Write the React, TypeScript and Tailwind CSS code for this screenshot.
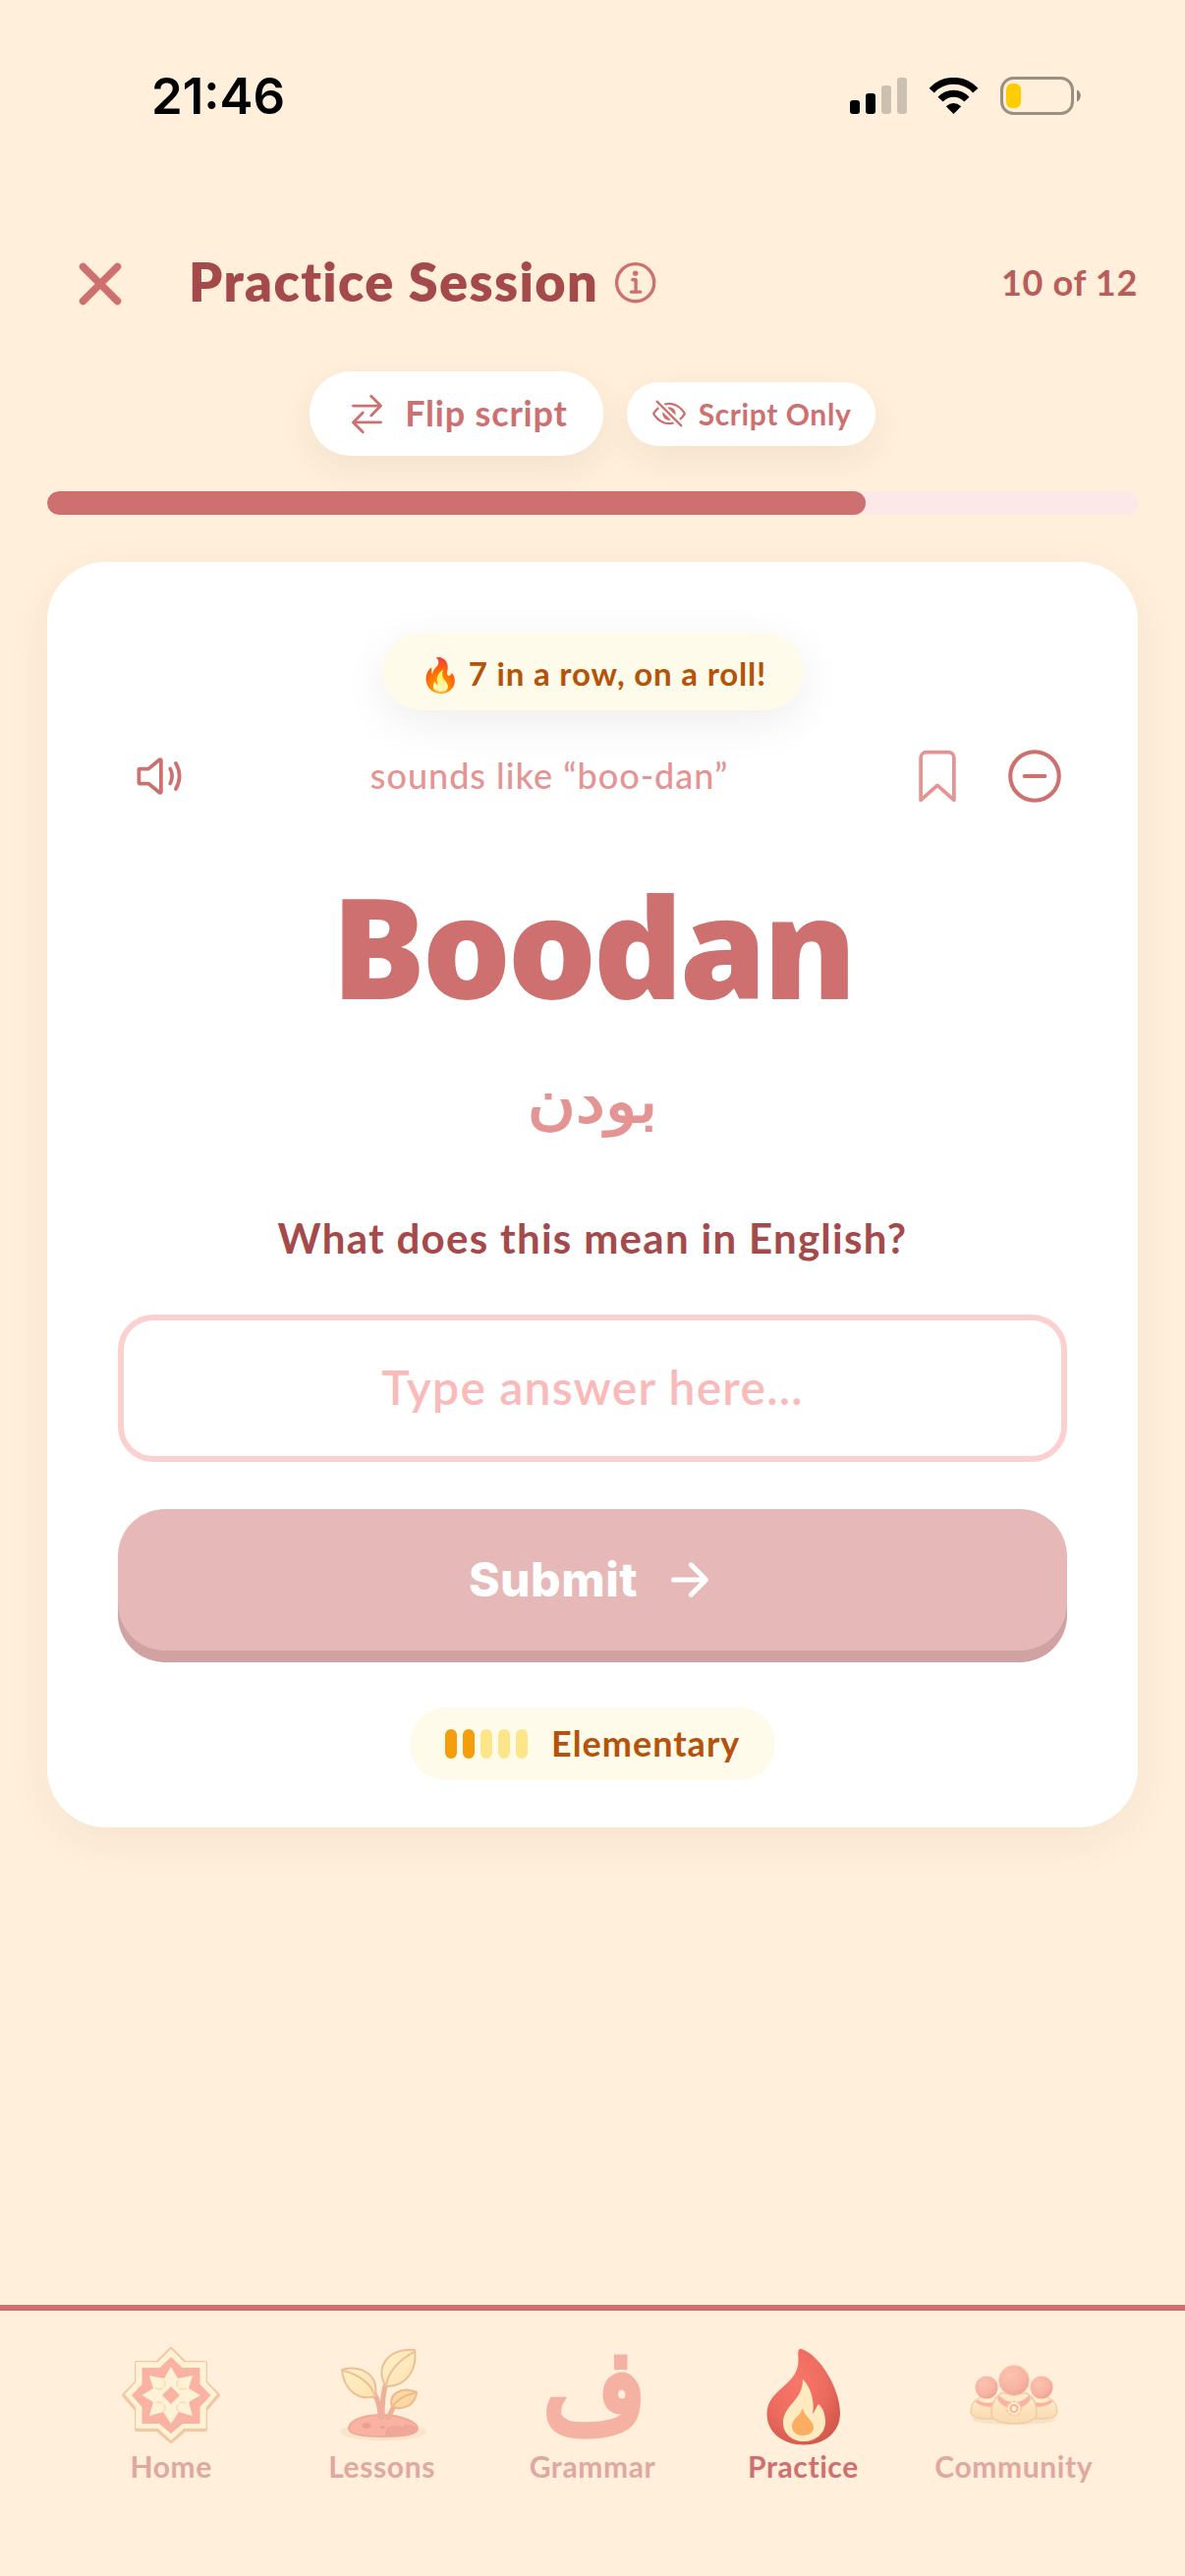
import type { ReactNode } from 'react';
import {
  IoArrowForward,
  IoBookmarkOutline,
  IoClose,
  IoEyeOffOutline,
  IoInformationCircleOutline,
  IoRemoveCircleOutline,
  IoSwapHorizontal,
  IoVolumeMediumOutline,
} from 'react-icons/io5';

function StatusBar() {
  return (
    <div className="flex h-[194px] shrink-0 items-center justify-between pl-[154px] pr-[106px]">
      <span className="pt-0.5 font-['Inter',sans-serif] text-[51px] font-semibold text-black">21:46</span>
      <div className="flex items-center">
        <svg width="58" height="37" viewBox="0 0 58 37" className="mr-[22px]">
          <rect x="0" y="23" width="10" height="14" rx="3" />
          <rect x="16" y="16" width="10" height="21" rx="3" />
          <rect x="32" y="8" width="10" height="29" rx="3" fill="#ccc0b0" />
          <rect x="48" y="0" width="10" height="37" rx="3" fill="#ccc0b0" />
        </svg>
        <svg width="51" height="37" viewBox="0 0 51 37" className="mr-[22px]">
          <path d="M3.2 13.1a30.4 30.4 0 0 1 44.6 0" fill="none" stroke="#000" strokeWidth="7" />
          <path d="M12.1 22.2a18.1 18.1 0 0 1 26.8 0" fill="none" stroke="#000" strokeWidth="7" />
          <path d="M17.8 29.2Q25.5 22.8 33.2 29.2L25.5 37Z" />
        </svg>
        <svg width="82" height="39" viewBox="0 0 82 39">
          <rect x="1.5" y="1.5" width="72" height="36" rx="12" fill="none" stroke="#9b8f82" strokeWidth="3" />
          <rect x="6" y="7" width="15" height="25" rx="6" fill="#ffcc00" />
          <path d="M78 13.5c5 2 5 10 0 12Z" fill="#8f857a" />
        </svg>
      </div>
    </div>
  );
}

function Header() {
  return (
    <header className="mt-[46px] flex h-24 items-center pl-[62px] pr-12">
      <IoClose className="mt-px size-20 text-[#ce7070]" />
      <h1 className="ml-[50px] pb-[3px] text-[54px] font-extrabold tracking-[1.4px] text-[#a54a4a]">Practice Session</h1>
      <IoInformationCircleOutline className="ml-3 size-[53px] text-[#ce7070]" />
      <span className="ml-auto pb-[3px] text-[36px] font-bold tracking-[0.7px] text-[#b85c5c]">10 of 12</span>
    </header>
  );
}

function Toggles() {
  return (
    <div className="mt-[42px] flex items-center justify-center gap-6 font-bold text-[#ce7070]">
      <button className="flex h-[86px] w-[299px] items-center justify-center gap-4 rounded-[42px] bg-white text-[36px] tracking-[0.8px] shadow-[0_12px_36px_rgba(80,50,0,0.07)]">
        <IoSwapHorizontal className="size-[45px]" />
        <span className="pb-0.5">Flip script</span>
      </button>
      <button className="flex h-[65px] w-[253px] items-center justify-center gap-3 rounded-[32px] bg-white text-[30px] tracking-[0.6px] shadow-[0_12px_36px_rgba(80,50,0,0.07)]">
        <IoEyeOffOutline className="size-9" />
        Script Only
      </button>
    </div>
  );
}

function LevelBadge() {
  const filled = 2;

  return (
    <div className="mx-auto mt-[46px] flex h-[74px] w-[372px] items-center rounded-[36px] bg-[#fffbeb] pl-9">
      <div className="flex gap-[6px]">
        {[1, 2, 3, 4, 5].map((n) => (
          <span key={n} className={`h-[30px] w-3 rounded-full ${n <= filled ? 'bg-[#f59e0b]' : 'bg-[#fde68a]'}`} />
        ))}
      </div>
      <span className="ml-6 pb-0.5 text-[36px] font-bold leading-none tracking-[1px] text-[#b45309]">Elementary</span>
    </div>
  );
}

function PracticeCard() {
  return (
    <main className="mx-12 mt-12 flex h-[1288px] shrink-0 flex-col rounded-[60px] bg-white px-[72px] pt-[72px] shadow-[0_12px_48px_rgba(80,50,0,0.06)]">
      <div className="ml-[269px] flex h-[79px] w-[429px] items-center justify-center rounded-full bg-[#fffbeb] pt-1 text-[33px] font-bold tracking-[0.8px] text-[#b45309] shadow-[0_12px_48px_rgba(0,0,0,0.07)]">
        <span className="mr-2 text-[34px] leading-none tracking-normal">🔥</span>
        7 in a row, on a roll!
      </div>

      <div className="mt-[19px] flex h-24 items-center text-[#ce7070]">
        <div className="flex w-[190px] pl-3">
          <IoVolumeMediumOutline className="size-[60px]" />
        </div>
        <p className="flex-1 pb-0.5 text-center text-[36px] font-medium tracking-[1px] text-[#e59494]">
          sounds like “boo-dan”
        </p>
        <div className="flex w-[278px] items-center justify-end gap-[36px]">
          <IoBookmarkOutline className="size-[60px] text-[#e59494]" />
          <IoRemoveCircleOutline className="size-[66px]" />
        </div>
      </div>

      <p className="mt-6 text-center font-['Open_Sans',sans-serif] text-[142px] font-extrabold leading-[200px] tracking-[-3.4px] text-[#ce7070]">
        Boodan
      </p>
      <p
        dir="rtl"
        className="mt-[19px] scale-y-90 text-center font-['DejaVu_Sans',sans-serif] text-[67px] leading-[80px] text-[#e59494] [-webkit-text-stroke:2px_#e59494]"
      >
        بودن
      </p>

      <h2 className="mt-[69px] text-center text-[42px] font-bold leading-[60px] tracking-[1.3px] text-[#a54a4a]">
        What does this mean in English?
      </h2>
      <input
        placeholder="Type answer here..."
        className="mt-12 h-[150px] w-full rounded-[36px] border-[6px] border-[#fdd0d0] pb-[3px] text-center text-[48px] font-semibold tracking-[1.2px] placeholder:text-[#fababa]"
      />
      <button className="mt-12 flex h-[144px] w-full shrink-0 items-center justify-center gap-[26px] rounded-[48px] bg-[#e6b8b8] font-['Inter',sans-serif] text-[48px] font-extrabold tracking-[0.5px] text-white shadow-[0_12px_0_#d1a2a2]">
        Submit
        <IoArrowForward className="size-[54px]" />
      </button>
      <div className="h-3 shrink-0" />
      <LevelBadge />
    </main>
  );
}

function HomeIcon() {
  return (
    <svg viewBox="0 0 100 100" className="size-[100px] overflow-visible" strokeLinejoin="round">
      <path
        d="M50 3 64 17H85V37L98 50 85 65V85H64L50 97 36 85H15V65L2 50 15 37V17H36Z"
        fill="#f0c8a2"
        stroke="#f0c8a2"
        strokeWidth="4"
      />
      <path d="M50 4 63 17H85V37L96 49 85 62V83H63L50 95 37 83H15V62L4 49 15 37V17H37Z" fill="#fff2d6" stroke="#fff2d6" strokeWidth="1.500" />
      <path d="M50 11 61.5 22H79.5V39L90.5 50 79.5 62V79H62L50 89 38 79H20.5V62L10 50 20.5 39V22H38.5Z" fill="#fab3a3" />
      <path
        d="M50 21 57 33 72 30 68 43 80 50 68 57 72 71 58 67 50 79 42 67 28 71 32 57 20.500 50 32 43 28 30 43 33Z"
        fill="#fff2d6"
      />
      <path d="M43 35q2 3 0 6M57 35q-2 3 0 6M43 60q2 3 0 6M57 60q-2 3 0 6M35 43q3 2 6 0M59 43q3 2 6 0M35 58q3-2 6 0M59 58q3-2 6 0" fill="none" stroke="#fbdfb2" strokeWidth="1.800" strokeLinecap="round" />
      <path d="M50 41 59 50 50 59 41 50Z" fill="#fab3a3" />
    </svg>
  );
}

function LessonsIcon() {
  return (
    <svg viewBox="0 0 100 100" className="size-[100px] overflow-visible" strokeLinejoin="round" strokeLinecap="round">
      <defs>
        <linearGradient id="leaf" x1="0" y1="0" x2="1" y2="1">
          <stop offset="0" stopColor="#fff0c8" />
          <stop offset="1" stopColor="#ffe2b0" />
        </linearGradient>
      </defs>
      <ellipse cx="51" cy="87" rx="44" ry="9.5" fill="#f9e5cb" />
      <path d="M16 84C16 76 30 70 50 70s36 8 36 14-16 8-35 8-35-2-35-8Z" fill="#fab3a3" stroke="#efaa98" strokeWidth="2" />
      <path d="M53 92c-1-8 5-11 9-11 4-1 6 1 8 1 3-4 10-3 15 1 2 5-9 9-20 9Z" fill="#efa898" />
      <ellipse cx="34" cy="81" rx="4.5" ry="3" fill="#ec9f90" />
      <ellipse cx="50.5" cy="82.5" rx="2.5" ry="1.5" fill="#ec9f90" />
      <path d="M48 73C48 62 46 55 42 49M50 73C50 58 51 46 54 38M56 73 61 63" fill="none" stroke="#edb09a" strokeWidth="5" />
      <path d="M9 24C24 20 47 25 43 51 27 56 11 46 9 24Z" fill="url(#leaf)" stroke="#ebc096" strokeWidth="2" />
      <path d="M11 25C25 29 37 36 42 49" fill="none" stroke="#ebc096" strokeWidth="2" />
      <path d="M83 4C86 22 76 41 54 41 42 24 54 2 83 4Z" fill="url(#leaf)" stroke="#ebc096" strokeWidth="2" />
      <path d="M82 6C68 14 56 26 54 40" fill="none" stroke="#ebc096" strokeWidth="2" />
      <path d="M85 47C84 59 73 66 60 62 56 50 68 40 85 47Z" fill="#ffd7a3" stroke="#ebb98c" strokeWidth="2" />
      <path d="M82 48C72 50 65 55 60 62" fill="none" stroke="#ebb98c" strokeWidth="2" />
    </svg>
  );
}

function GrammarIcon() {
  return (
    <span className="flex size-[100px] items-center justify-center">
      <span className="scale-y-115 pl-1 pb-2 font-['DejaVu_Sans',sans-serif] text-[101px] leading-[92px] text-[#f5b2a3] [-webkit-text-stroke:6px_#f5b2a3]">
        ف
      </span>
    </span>
  );
}

function PracticeIcon() {
  return (
    <svg viewBox="0 0 100 100" className="size-[100px] overflow-visible">
      <defs>
        <radialGradient id="flame" cx="0.4" cy="0.35" r="0.7">
          <stop offset="0" stopColor="#f8776a" />
          <stop offset="0.6" stopColor="#ec6b5f" />
          <stop offset="1" stopColor="#d4584d" />
        </radialGradient>
      </defs>
      <path d="M49 3C67 9 88 43 88 68c0 20-16 32.500-37 32.500S13.500 88 13.500 69C13.500 43 47 40 45.500 13 45 6 45 2 49 3Z" fill="url(#flame)" />
      <path d="M50 34C56 39 63 54 60 69 63 66 63 62 66 59 71 63 73 71 73 77 73 89 63 97 51 97S30 89 30 78C30 60 50 56 50 34Z" fill="#ffebbf" />
      <path d="M50 63C52 73 61 75 61 83 61 88 56 91 50 91 43 91 39 87 39 81 39 74 47 72 50 63Z" fill="#fbae62" />
    </svg>
  );
}

function CommunityIcon() {
  return (
    <svg viewBox="0 0 100 100" className="size-[100px] overflow-visible">
      <defs>
        <radialGradient id="head" cx="0.38" cy="0.32" r="0.7">
          <stop offset="0" stopColor="#fdc2b0" />
          <stop offset="0.7" stopColor="#f8b3a2" />
          <stop offset="1" stopColor="#eda594" />
        </radialGradient>
        <linearGradient id="robe" x1="0" y1="0" x2="0" y2="1">
          <stop offset="0" stopColor="#ffedca" />
          <stop offset="1" stopColor="#fad9b2" />
        </linearGradient>
      </defs>
      <ellipse cx="50" cy="75" rx="42" ry="5" fill="#f8e2c7" />
      <g stroke="#f0cca3" strokeWidth="1.3">
        <path d="M14 53C8 56 6 62 6 67c0 5 6 7 16 7h10V53Z" fill="url(#robe)" />
        <path d="M86 53c6 3 8 9 8 14 0 5-6 7-16 7H68V53Z" fill="url(#robe)" />
      </g>
      <path d="M10 56C16 62 26 63 32 61V55H14ZM90 56C84 62 74 63 68 61V55H86Z" fill="#fab3a3" />
      <ellipse cx="23" cy="54.5" rx="9" ry="3.2" fill="#ffedca" />
      <ellipse cx="77" cy="54.5" rx="9" ry="3.2" fill="#ffedca" />
      <circle cx="22" cy="42" r="11.5" fill="url(#head)" />
      <circle cx="78" cy="42" r="11.5" fill="url(#head)" />
      <path d="M37 48C29 53 27 61 27 68c0 8 11 11 23 11s23-3 23-11c0-7-2-15-10-20Z" fill="url(#robe)" stroke="#f0cca3" strokeWidth="1.5" />
      <path d="M35 50C40 56 45 57 50 57S60 56 65 50L67 54C62 62 56 63 50 63S38 62 33 54Z" fill="#fab3a3" />
      <circle cx="50" cy="35" r="15.5" fill="url(#head)" stroke="#fbd3b0" strokeWidth="1" />
      <circle cx="50" cy="63.5" r="7" fill="#fff0cf" stroke="#f4c4a0" strokeWidth="1.5" strokeDasharray="3 1.5" />
      <circle cx="50" cy="63.5" r="3.6" fill="none" stroke="#f8b09c" strokeWidth="2" />
    </svg>
  );
}

const tabs: { label: string; icon: ReactNode; active?: boolean }[] = [
  { label: 'Home', icon: <HomeIcon /> },
  { label: 'Lessons', icon: <LessonsIcon /> },
  { label: 'Grammar', icon: <GrammarIcon /> },
  { label: 'Practice', icon: <PracticeIcon />, active: true },
  { label: 'Community', icon: <CommunityIcon /> },
];

function TabBar() {
  return (
    <nav className="mt-auto grid h-[276px] grid-cols-5 border-t-[6px] border-[#ce7070] px-[67px] pt-9">
      {tabs.map((tab) => (
        <div key={tab.label} className="flex flex-col items-center">
          {tab.icon}
          <span
            className={`mt-1 text-[30px] font-bold leading-9 tracking-[0.6px] ${tab.active ? 'text-[#ce7070]' : 'text-[#dfa8a1]'}`}
          >
            {tab.label}
          </span>
        </div>
      ))}
    </nav>
  );
}

export default function App() {
  return (
    <div className="flex h-[2622px] w-[1206px] flex-col overflow-hidden bg-[#ffefdb] font-['Lato',sans-serif]">
      <StatusBar />
      <Header />
      <Toggles />
      <div className="mx-12 mt-9 h-6 shrink-0 overflow-hidden rounded-full bg-[#fce8e6]">
        <div className="h-full w-3/4 rounded-full bg-[#ce7070]" />
      </div>
      <PracticeCard />
      <TabBar />
    </div>
  );
}
